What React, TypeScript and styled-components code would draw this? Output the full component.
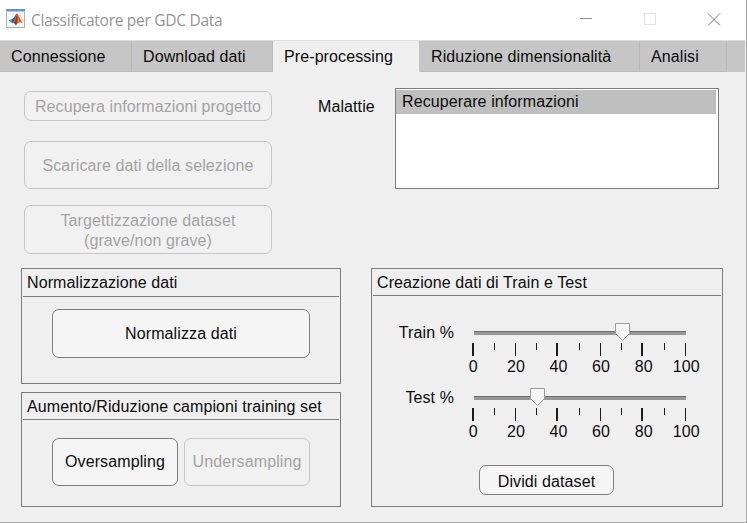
import React from "react";
import styled, { createGlobalStyle } from "styled-components";

const GlobalStyle = createGlobalStyle`
  * { box-sizing: border-box; }
  body { margin: 0; overflow: hidden; background: #fff; }
`;

const Window = styled.div`
  width: 747px;
  height: 523px;
  display: flex;
  flex-direction: column;
  background: #efefef;
  border-right: 1px solid #a6a6a6;
  border-bottom: 1px solid #a6a6a6;
  font: 16px/20px "Liberation Sans", Arial, sans-serif;
  letter-spacing: 0.1px;
  color: #0c0c0c;
  white-space: nowrap;
`;

const TitleBar = styled.header`
  height: 40px;
  flex: none;
  display: flex;
  align-items: center;
  background: #fff;
  padding: 0 25px 2px 6px;
`;

const Title = styled.h1`
  margin: 0 auto 0 5px;
  padding-top: 1px;
  font: 400 15.5px/20px "Open Sans", sans-serif;
  letter-spacing: -0.28px;
  color: #959595;
`;

const WindowControls = styled.div`
  display: flex;
  gap: 50px;
  svg { display: block; }
`;

const TabBar = styled.nav`
  height: 32px;
  flex: none;
  display: flex;
  margin-right: 1px;
  background: #c6c6c6;
  border-top: 1px solid #dedede;
`;

const Tab = styled.div<{ $width: number; $active?: boolean }>`
  width: ${(p) => p.$width}px;
  padding: 6px 0 0 11px;
  background: ${(p) => (p.$active ? "#efefef" : "#c6c6c6")};
  border-right: 1px solid ${(p) => (p.$active ? "#c6c6c6" : "#b9b9b9")};
  border-bottom: 1px solid ${(p) => (p.$active ? "#efefef" : "#bdbdbd")};
`;

const Content = styled.main`
  flex: 1;
  padding: 16px 23px 15px 21px;
  display: flex;
  flex-direction: column;
  justify-content: space-between;
`;

const TopRow = styled.div`
  display: flex;
  padding-left: 3px;
  height: 166px;
`;

const ActionColumn = styled.div`
  display: flex;
  flex-direction: column;
  padding-top: 3px;
`;

const Button = styled.button<{ $w: number; $h: number; $top?: number; $drop?: number }>`
  width: ${(p) => p.$w}px;
  height: ${(p) => p.$h}px;
  flex: none;
  margin: ${(p) => p.$top ?? 0}px 0 0;
  padding: ${(p) => p.$drop ?? 2}px 0 0;
  border: 1px solid #7d7d7d;
  border-radius: 7px;
  background: #f5f5f5;
  font: inherit;
  letter-spacing: inherit;
  color: #0c0c0c;
  text-align: center;
  &:disabled {
    border-color: #c6c6c6;
    background: #f1f1f1;
    color: #a3a3a3;
  }
`;

const ListLabel = styled.label`
  width: 77px;
  margin: 9px 0 0 46px;
`;

const ListBox = styled.div`
  width: 324px;
  height: 101px;
  border: 1px solid #7d7d7d;
  background: #fff;
  padding: 1px 2px 0 0;
`;

const ListItem = styled.div`
  height: 24px;
  padding: 2px 0 0 6px;
  background: #bfbfbf;
`;

const Panels = styled.div`
  display: flex;
  justify-content: space-between;
`;

const PanelColumn = styled.div`
  display: flex;
  flex-direction: column;
  gap: 8px;
`;

const Panel = styled.section<{ $w: number; $h: number }>`
  width: ${(p) => p.$w}px;
  height: ${(p) => p.$h}px;
  border: 1px solid #7d7d7d;
`;

const PanelTitle = styled.h2<{ $h: number }>`
  height: ${(p) => p.$h}px;
  margin: 0 1px 0 1px;
  padding: 4px 0 0 4px;
  border-bottom: 1px solid #7d7d7d;
  font: inherit;
`;

const ButtonRow = styled.div<{ $top: number; $left: number }>`
  display: flex;
  gap: 6px;
  padding: ${(p) => p.$top}px 0 0 ${(p) => p.$left}px;
`;

const SliderRows = styled.div`
  padding-top: 26px;
`;

const SliderRow = styled.div`
  display: flex;
  height: 65px;
`;

const SliderLabel = styled.span`
  width: 82px;
  padding-top: 1px;
  text-align: right;
`;

const SliderBody = styled.div`
  width: 232px;
  margin-left: 8px;
  svg { display: block; margin-left: 10px; overflow: visible; }
`;

const Scale = styled.div`
  display: grid;
  grid-template-columns: repeat(6, 42.6px);
  margin: 1px 0 0 -10px;
  text-align: center;
`;

const MatlabIcon = () => (
  <svg width="20" height="20" viewBox="0 0 20 20">
    <rect x="0.5" y="0.5" width="18" height="18" fill="#f3f5f7" stroke="#a9b3bd" />
    <rect x="0" y="0" width="19" height="2" fill="#6f93b5" />
    <rect x="0" y="2" width="19" height="1" fill="#b9cbdc" />
    <path d="M2.5 11.5 6.5 9.7 8.8 12 6 14Z" fill="#3f8fc9" />
    <path d="M6.5 9.7C8.5 9 9.4 5.5 11 4.6L9.2 11.5 7.8 12.8 6 14Z" fill="#2d5f8c" />
    <path d="M11 4.6C12.5 5 14 11 17 14.5 14.5 12.8 13 12.7 10 16.3 9.2 14.4 8 13.5 6 14 9 11.5 9.5 7 11 4.6Z" fill="#d9541e" />
    <path d="M11 5C10.3 9 10.2 12 8 13.7L10 16.3C11 14 11.3 9 11 5Z" fill="#963020" />
    <path d="M11.3 5.5C12.5 8 12.5 11 11.5 13.6L12.8 13C12.8 10 12.5 7.5 11.3 5.5Z" fill="#f3a244" />
  </svg>
);

const TICKS = [0, 21, 42, 63, 84, 106, 127, 148, 169, 191, 212];

const Slider = ({ label, value }: { label: string; value: number }) => {
  const x = Math.ceil(value * 2.12) + 1;
  return (
    <SliderRow>
      <SliderLabel>{label}</SliderLabel>
      <SliderBody>
        <svg width="214" height="34" viewBox="0 0 214 34" shapeRendering="crispEdges">
          <rect x="2" y="9" width="212" height="4" fill="#979797" />
          <rect x="2" y="9" width="212" height="1" fill="#6f6f6f" />
          {TICKS.map((t, i) => (
            <rect
              key={t}
              x={t + (i % 4 === 0 ? 0 : 1)}
              y="21"
              width={i % 4 === 0 ? 2 : 1}
              height={i % 2 === 0 ? 13 : 7}
              fill="#1c1c1c"
            />
          ))}
          <path
            d={`M${x - 6.5} 1.5h14v10l-7 7-7-7z`}
            fill="#f5f5f5"
            stroke="#9a9a9a"
            shapeRendering="auto"
          />
        </svg>
        <Scale>
          {[0, 20, 40, 60, 80, 100].map((n) => (
            <span key={n}>{n}</span>
          ))}
        </Scale>
      </SliderBody>
    </SliderRow>
  );
};

export default function App() {
  return (
    <>
      <GlobalStyle />
      <Window>
        <TitleBar>
          <MatlabIcon />
          <Title>Classificatore per GDC Data</Title>
          <WindowControls>
            <svg width="14" height="14" shapeRendering="crispEdges">
              <path d="M1 6.5h12" stroke="#8c8c8c" />
            </svg>
            <svg width="14" height="14">
              <rect x="1.5" y="1.5" width="11" height="11" fill="none" stroke="#e3e3e3" />
            </svg>
            <svg width="14" height="14">
              <path d="M1 1.5l12 12M13 1.5l-12 12" stroke="#808080" />
            </svg>
          </WindowControls>
        </TitleBar>
        <TabBar>
          <Tab $width={132}>Connessione</Tab>
          <Tab $width={141}>Download dati</Tab>
          <Tab $width={147} $active>Pre-processing</Tab>
          <Tab $width={220}>Riduzione dimensionalità</Tab>
          <Tab $width={87}>Analisi</Tab>
        </TabBar>
        <Content>
          <TopRow>
            <ActionColumn>
              <Button $w={248} $h={30} disabled>Recupera informazioni progetto</Button>
              <Button $w={248} $h={48} $top={20} disabled>Scaricare dati della selezione</Button>
              <Button $w={248} $h={49} $top={16} disabled>
                Targettizzazione dataset
                <br />
                (grave/non grave)
              </Button>
            </ActionColumn>
            <ListLabel>Malattie</ListLabel>
            <ListBox>
              <ListItem>Recuperare informazioni</ListItem>
            </ListBox>
          </TopRow>
          <Panels>
            <PanelColumn>
              <Panel $w={320} $h={116}>
                <PanelTitle $h={28}>Normalizzazione dati</PanelTitle>
                <ButtonRow $top={12} $left={30}>
                  <Button $w={258} $h={49} $drop={0}>Normalizza dati</Button>
                </ButtonRow>
              </Panel>
              <Panel $w={320} $h={115}>
                <PanelTitle $h={27}>Aumento/Riduzione campioni training set</PanelTitle>
                <ButtonRow $top={18} $left={30}>
                  <Button $w={126} $h={48} $drop={0}>Oversampling</Button>
                  <Button $w={126} $h={48} $drop={0} disabled>Undersampling</Button>
                </ButtonRow>
              </Panel>
            </PanelColumn>
            <Panel $w={352} $h={239}>
              <PanelTitle $h={27}>Creazione dati di Train e Test</PanelTitle>
              <SliderRows>
                <Slider label="Train %" value={70} />
                <Slider label="Test %" value={30} />
              </SliderRows>
              <ButtonRow $top={13} $left={107}>
                <Button $w={135} $h={30} $drop={3}>Dividi dataset</Button>
              </ButtonRow>
            </Panel>
          </Panels>
        </Content>
      </Window>
    </>
  );
}
